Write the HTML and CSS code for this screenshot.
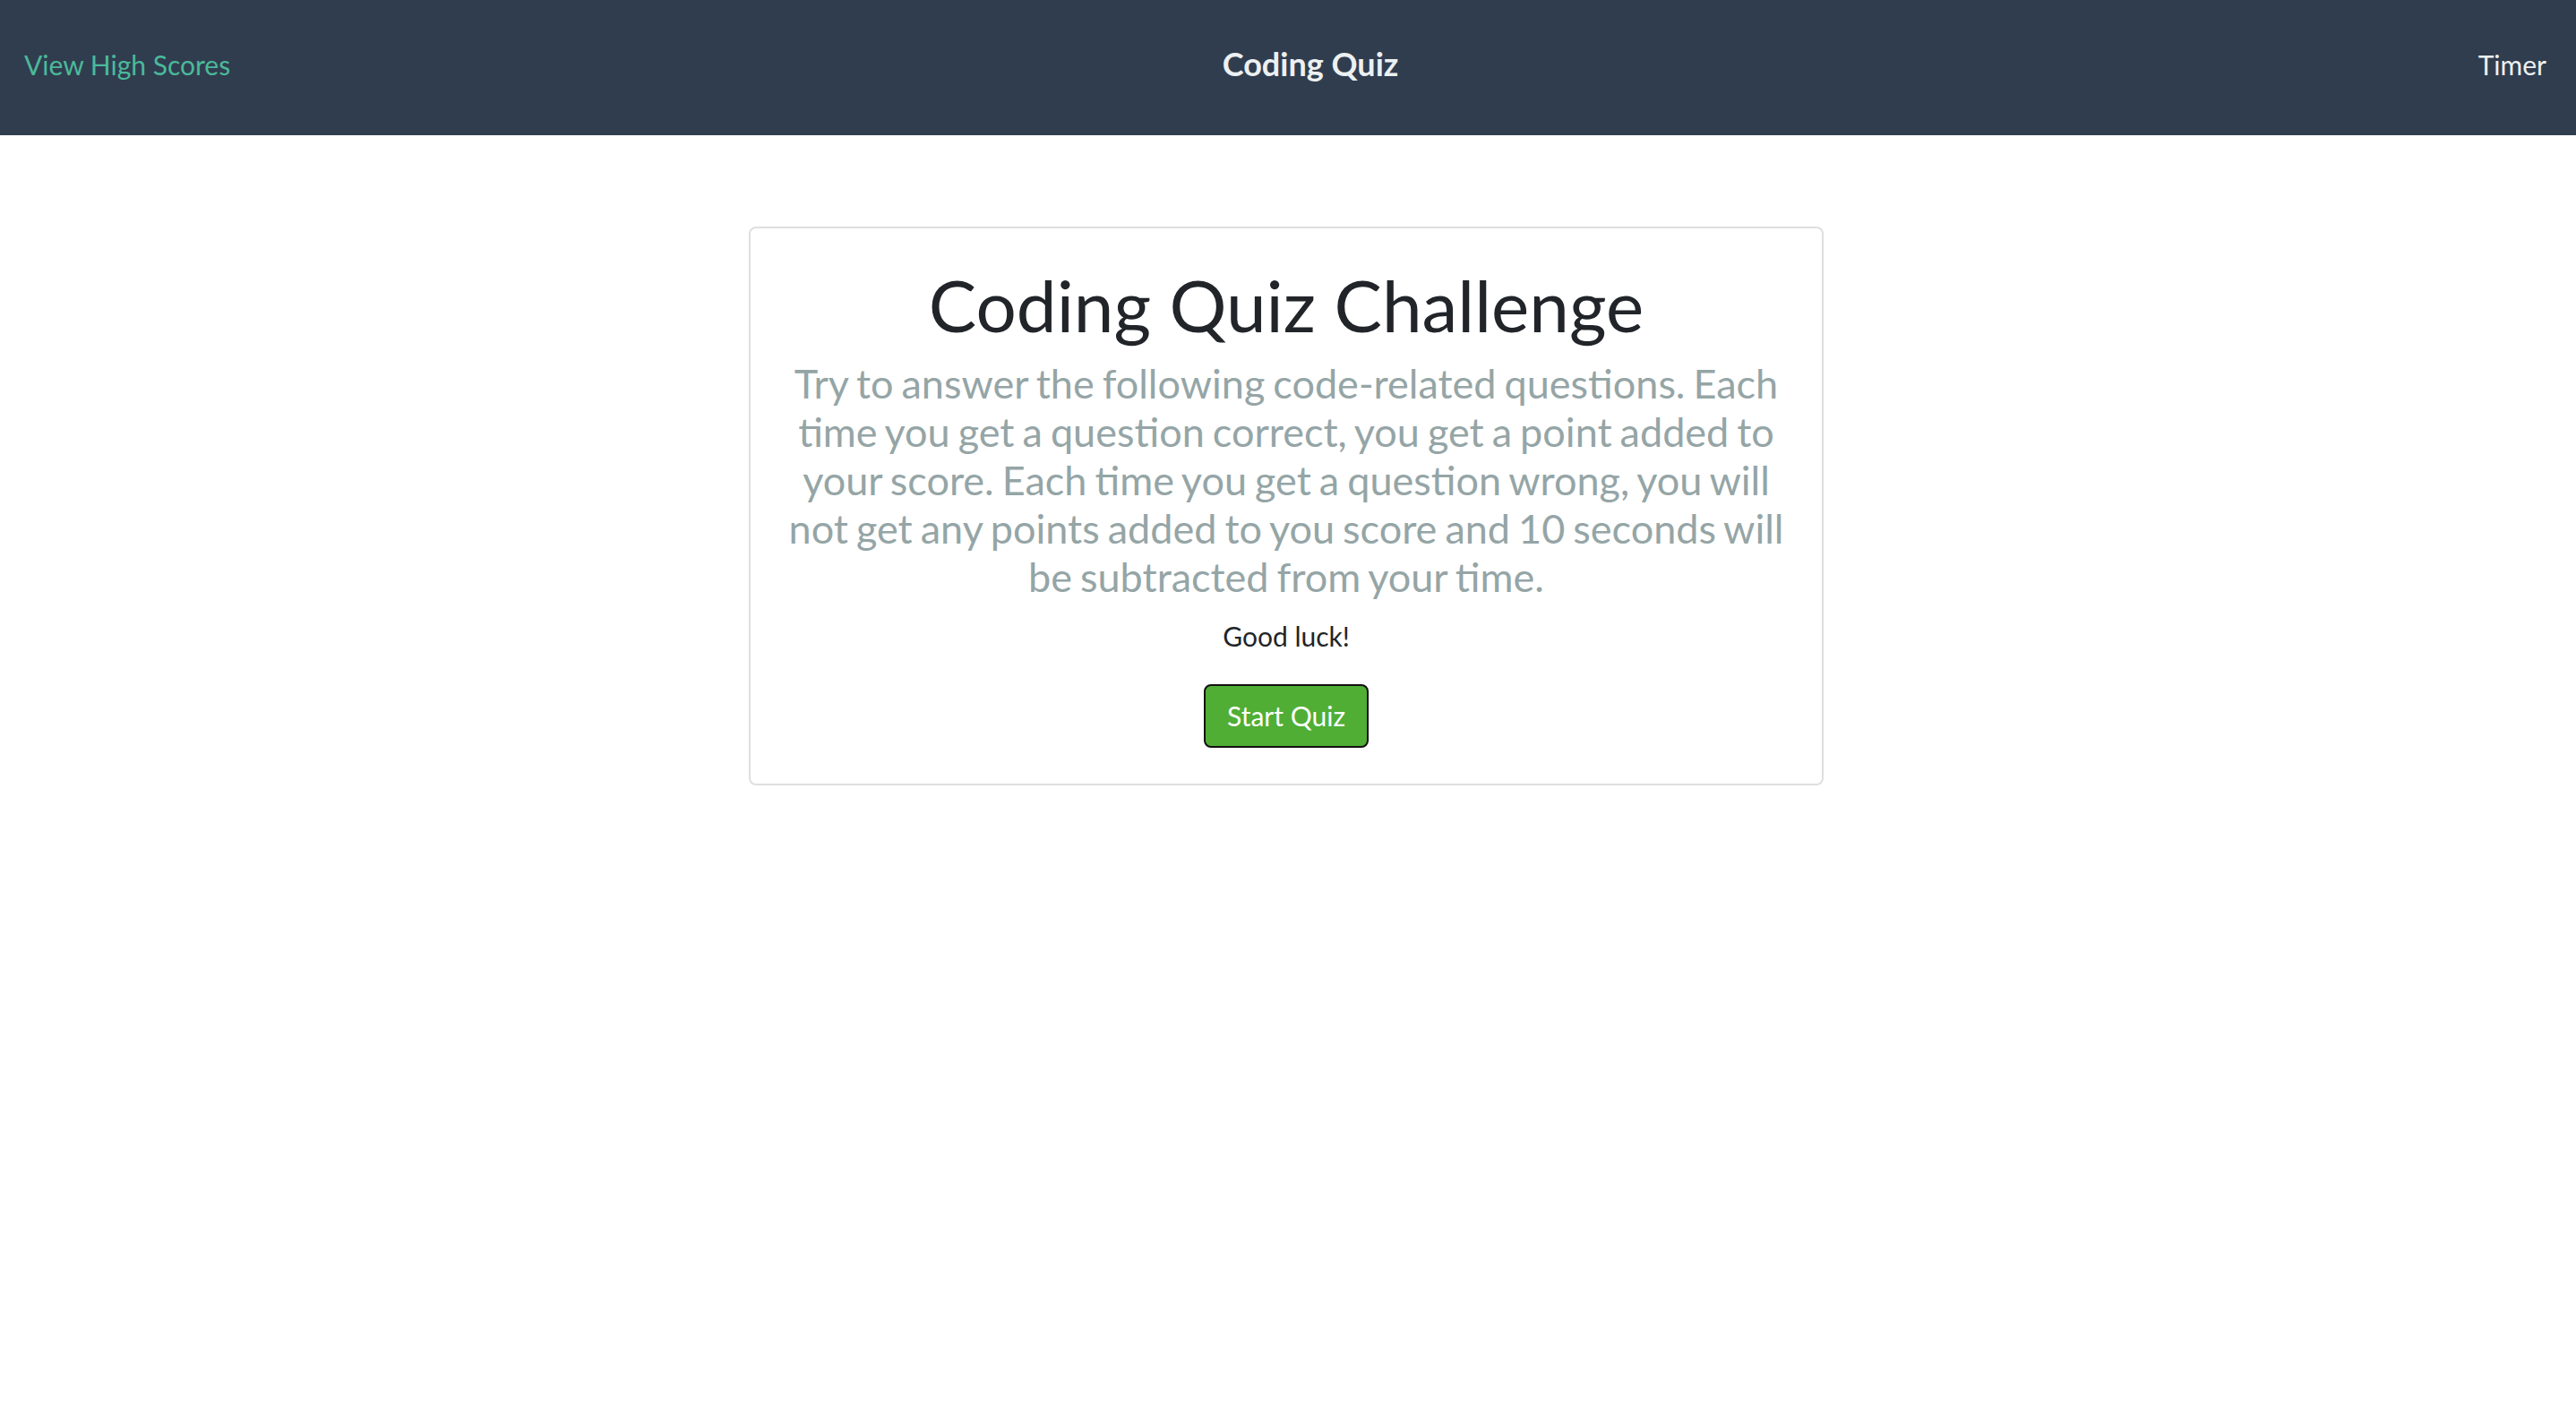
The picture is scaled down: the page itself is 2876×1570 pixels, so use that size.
FILE: index.html
```html
<!DOCTYPE html>
<html lang="en">
<head>
<meta charset="utf-8">
<title>Coding Quiz</title>
<link rel="stylesheet" href="styles.css">
</head>
<body>
<header class="topbar">
  <a class="scores-link" href="#">View High Scores</a>
  <div class="brand">Coding Quiz</div>
  <div class="timer">Timer</div>
</header>
<main class="page">
  <section class="card">
    <h1 class="card-title">Coding Quiz Challenge</h1>
    <p class="lead">Try to answer the following code-related questions. Each time you get a question correct, you get a point added to your score. Each time you get a question wrong, you will not get any points added to you score and 10 seconds will be subtracted from your time.</p>
    <p class="luck">Good luck!</p>
    <button class="start-btn" type="button">Start Quiz</button>
  </section>
</main>
</body>
</html>
```
FILE: styles.css
```css
html, body {
  margin: 0;
  padding: 0;
  background: #ffffff;
}

body {
  font-family: Lato, "Open Sans", "Liberation Sans", sans-serif;
  color: #212529;
  font-size: 30px;
  line-height: 1.5;
}

.topbar {
  height: 151px;
  box-sizing: border-box;
  background: #303d4f;
  display: flex;
  align-items: center;
  justify-content: space-between;
  padding: 0 33px 7px 27px;
}

.scores-link {
  color: #4bb99a;
  text-decoration: none;
  font-size: 30px;
  line-height: 45px;
}

.brand {
  color: #ecf0f1;
  font-weight: 700;
  font-size: 36px;
  line-height: 45px;
  padding-bottom: 2px;
}

.timer {
  color: #ecf0f1;
  font-size: 30px;
  line-height: 45px;
  width: 174px;
  text-align: right;
}

.page {
  display: flex;
  justify-content: center;
  padding-top: 102px;
  padding-right: 4px;
}

.card {
  width: 1200px;
  box-sizing: border-box;
  border: 2px solid #dfdfdf;
  border-radius: 8px;
  padding: 37px 36px 40px;
  text-align: center;
  display: flex;
  flex-direction: column;
  align-items: center;
}

.card-title {
  margin: 0 0 13px;
  font-size: 80px;
  line-height: 96px;
  font-weight: 400;
  color: #212529;
}

.lead {
  margin: 0 0 17px;
  font-size: 45px;
  line-height: 54px;
  word-spacing: -2.5px;
  color: #95a5a6;
}

.luck {
  margin: 0 0 31px;
  font-size: 30px;
  line-height: 45px;
  color: #212529;
}

.start-btn {
  font-family: Lato, "Open Sans", "Liberation Sans", sans-serif;
  font-size: 30px;
  line-height: 43px;
  padding: 12px 24px;
  color: #ffffff;
  background: #50ae35;
  border: 2px solid #111111;
  border-radius: 8px;
  cursor: pointer;
}
```
